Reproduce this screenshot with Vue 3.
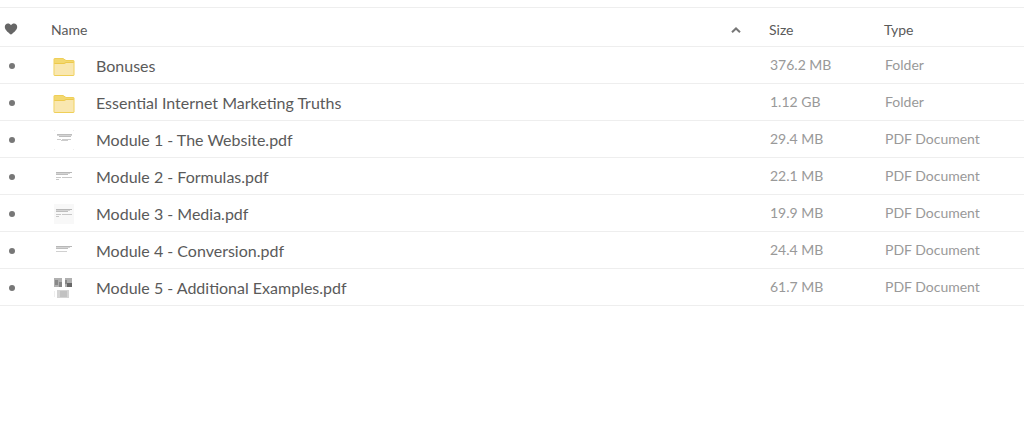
<script setup>
import { ref, computed } from 'vue'

const ascending = ref(true)
const files = [
  { name: 'Bonuses', size: '376.2 MB', type: 'Folder', icon: 'folder' },
  { name: 'Essential Internet Marketing Truths', size: '1.12 GB', type: 'Folder', icon: 'folder' },
  { name: 'Module 1 - The Website.pdf', size: '29.4 MB', type: 'PDF Document', icon: 'centered' },
  { name: 'Module 2 - Formulas.pdf', size: '22.1 MB', type: 'PDF Document', icon: 'left' },
  { name: 'Module 3 - Media.pdf', size: '19.9 MB', type: 'PDF Document', icon: 'shaded' },
  { name: 'Module 4 - Conversion.pdf', size: '24.4 MB', type: 'PDF Document', icon: 'short' },
  { name: 'Module 5 - Additional Examples.pdf', size: '61.7 MB', type: 'PDF Document', icon: 'images' },
]
const rows = computed(() => (ascending.value ? files : [...files].reverse()))
</script>

<template>
  <main class="browser">
    <table class="files">
      <colgroup>
        <col class="col-fav" />
        <col class="col-icon" />
        <col />
        <col class="col-size" />
        <col class="col-type" />
      </colgroup>
      <thead>
        <tr>
          <th class="fav" scope="col" aria-label="Favorite">
            <svg class="heart" viewBox="0 0 14 12" aria-hidden="true">
              <path d="M7 11.6C5.6 10.3 .8 7.3 .8 3.9 .8 1.9 2.2 .6 3.9 .6 5.2 .6 6.3 1.2 7 2.2 7.7 1.2 8.8 .6 10.1 .6 11.8 .6 13.2 1.9 13.2 3.9 13.2 7.3 8.4 10.3 7 11.6Z" />
            </svg>
          </th>
          <th class="name-head" colspan="2" scope="col" :aria-sort="ascending ? 'ascending' : 'descending'">
            <button class="sort" type="button" @click="ascending = !ascending">
              <span>Name</span>
              <svg class="caret" :class="{ down: !ascending }" viewBox="0 0 10 6" aria-hidden="true">
                <path d="M1 5.2 5 1.4 9 5.2" />
              </svg>
            </button>
          </th>
          <th scope="col">Size</th>
          <th scope="col">Type</th>
        </tr>
      </thead>
      <tbody>
        <tr v-for="file in rows" :key="file.name">
          <td class="fav"><span class="dot"></span></td>
          <td class="icon">
            <svg v-if="file.icon === 'folder'" class="thumb" viewBox="0 0 22 22" aria-hidden="true">
              <path d="M1 20V4Q1 3.500 1.500 3.500H10L13 5.500H20.500Q21 5.500 21 6V20Q21 20.500 20.500 20.500H1.500Q1 20.500 1 20Z" fill="#f3d870" stroke="#efcf58" />
              <path d="M1.500 9H11L13 8H20.500V20H1.500Z" fill="#f9e7b0" />
              <path d="M1.500 8.500H11L13 7.500H20.500" fill="none" stroke="#edc94c" />
            </svg>
            <svg v-else class="thumb photo" viewBox="0 0 22 22" aria-hidden="true">
              <g v-if="file.icon === 'centered'">
                <path d="M1 1h1v1H1zM20 1h1v1h-1zM1 20h1v1H1zM20 20h1v1h-1z" fill="#eeeeee" />
                <path d="M4 5h15v1H4zM6 7h12v1H6z" fill="#bdbdbd" />
                <path d="M4 6h15v1H4z" fill="#d4d4d4" />
                <path d="M4 10h4v1H4zM9 10h9v1H9zM8 11h7v1H8z" fill="#cccccc" />
              </g>
              <g v-else-if="file.icon === 'images'">
                <path d="M1 1h8v9H1zM12 1h7v9h-7z" fill="#b0b0b0" />
                <path d="M2 3h3v5H2zM6 5h3v5H6zM12 3h2v4h-2z" fill="#888888" />
                <path d="M14 6h5v4h-5z" fill="#686868" />
                <path d="M4 13h12v8H4z" fill="#d4d4d4" />
                <path d="M7 14h7v6H7z" fill="#c2c2c2" />
                <path d="M1 14h1v6H1z" fill="#eeeeee" />
              </g>
              <g v-else>
                <path v-if="file.icon === 'shaded'" d="M1 1h20v20H1z" fill="#f8f8f8" />
                <path d="M3 6h16v1H3z" fill="#b8b8b8" />
                <path d="M3 7h14v1H3z" fill="#d4d4d4" />
                <path d="M3 8h12v1H3z" fill="#bebebe" />
                <path v-if="file.icon === 'short'" d="M3 11h11v1H3z" fill="#d0d0d0" />
                <path v-else d="M3 11h5v1H3zM9 11h10v1H9zM3 13h3v1H3z" fill="#c8c8c8" />
              </g>
            </svg>
          </td>
          <td class="name">{{ file.name }}</td>
          <td class="meta">{{ file.size }}</td>
          <td class="meta">{{ file.type }}</td>
        </tr>
      </tbody>
    </table>
  </main>
</template>

<style>
body {
  background: #ffffff;
}
</style>

<style scoped>
.browser {
  padding-top: 7px;
  font-family: Lato, "Open Sans", sans-serif;
  color: #5a5a5a;
}
.files {
  width: 100%;
  table-layout: fixed;
  border-collapse: separate;
  border-spacing: 0;
  border-top: 1px solid #eeeeee;
}
.col-fav {
  width: 51px;
}
.col-icon {
  width: 45px;
}
.col-size {
  width: 115px;
}
.col-type {
  width: 140px;
}
th,
td {
  box-sizing: border-box;
  height: 37px;
  padding: 0;
  border-bottom: 1px solid #eeeeee;
  text-align: left;
  vertical-align: middle;
}
th {
  height: 39px;
  padding-top: 6px;
  font-size: 14px;
  font-weight: 400;
  line-height: 18px;
}
.fav {
  padding-left: 4px;
}
th.fav {
  padding-top: 4px;
}
.heart {
  display: block;
  width: 14px;
  height: 12px;
  fill: #666666;
}
.sort {
  display: flex;
  align-items: center;
  justify-content: space-between;
  width: 100%;
  padding: 0 28px 0 0;
  border: 0;
  background: none;
  color: inherit;
  font: inherit;
  text-align: left;
  cursor: pointer;
}
.caret {
  width: 10px;
  height: 6px;
  fill: none;
  stroke: #777777;
  stroke-width: 2;
}
.caret.down {
  transform: rotate(180deg);
}
.dot {
  display: block;
  width: 6px;
  height: 6px;
  margin: 2px 0 0 5px;
  border-radius: 50%;
  background: #777777;
}
.icon {
  padding: 2px 0 0 2px;
}
.thumb {
  display: block;
  width: 22px;
  height: 22px;
}
.photo {
  filter: blur(0.5px);
}
.name {
  padding-top: 2px;
  font-size: 16px;
  line-height: 20px;
  white-space: nowrap;
}
.meta {
  padding-left: 1px;
  font-size: 14px;
  line-height: 18px;
  color: #999999;
  white-space: nowrap;
}
</style>
